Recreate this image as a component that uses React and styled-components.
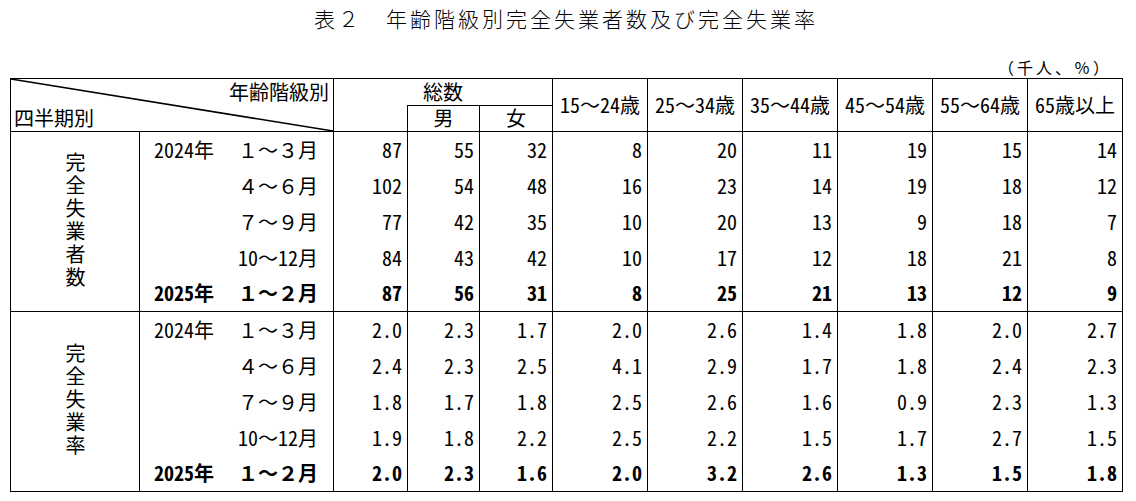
import styled, { createGlobalStyle } from "styled-components";

const GlobalStyle = createGlobalStyle`
  body {
    margin: 0;
    background: #fff;
    color: #000;
  }
`;

const Page = styled.div`
  width: 1112px;
  padding: 5px 14px 0 10px;
  font-family: "Noto Sans Mono CJK JP", "Noto Sans CJK JP", sans-serif;
`;

const Title = styled.h1`
  margin: 0;
  height: 26px;
  line-height: 26px;
  text-align: center;
  font-size: 21px;
  font-weight: 300;
  letter-spacing: 3px;
  font-family: "Noto Sans CJK JP", sans-serif;
`;

const Units = styled.div`
  margin-top: 26px;
  height: 21px;
  line-height: 21px;
  padding-right: 10px;
  text-align: right;
  font-size: 16px;
  font-weight: 300;
  letter-spacing: 3px;
`;

const Table = styled.table`
  width: 1112px;
  border-collapse: collapse;
  table-layout: fixed;
  font-size: 20px;
  line-height: 1;
`;

const HeadRow = styled.tr`
  height: 26px;
`;

const Th = styled.th`
  border: 1px solid #000;
  padding: 0;
  font-weight: 400;
  text-align: center;
  vertical-align: middle;
`;

// 左上の斜線セル
const CornerCell = styled(Th)`
  position: relative;
  padding: 0 4px 0 3px;
`;

const CornerGrid = styled.div`
  display: grid;
  grid-template-rows: 26px 26px;
  align-items: center;
`;

const CornerTop = styled.span`
  text-align: right;
`;

const CornerBottom = styled.span`
  text-align: left;
`;

const Diagonal = styled.svg`
  position: absolute;
  top: 0;
  left: 0;
  width: 100%;
  height: 100%;
  overflow: visible;
  pointer-events: none;
`;

const TotalHead = styled(Th)`
  border-bottom: none;
`;

const BlankSub = styled(Th)`
  border-top: none;
`;

const Section = styled.tbody`
  border-top: 1px solid #000;
  border-bottom: 1px solid #000;
`;

const DataRow = styled.tr`
  height: 36px;
  font-weight: ${(p) => (p.$bold ? 700 : 400)};
`;

const LabelCell = styled.td`
  border: 1px solid #000;
  padding: 0;
  text-align: center;
  vertical-align: middle;
`;

const VerticalLabel = styled.div`
  display: inline-block;
  writing-mode: vertical-rl;
  letter-spacing: 3px;
  font-family: "Noto Sans CJK JP", sans-serif;
`;

const PeriodCell = styled.td`
  border-style: solid;
  border-color: #000;
  border-width: 0 1px;
  padding: 0;
  vertical-align: middle;
`;

const Period = styled.div`
  display: flex;
  justify-content: space-between;
  padding: 0 15px 0 14px;
`;

const NumCell = styled.td`
  border-style: solid;
  border-color: #000;
  border-width: 0 1px;
  padding: 0 5px 0 0;
  text-align: right;
  vertical-align: middle;
`;

const widths = [129, 194, 74, 72, 73, 95, 95, 95, 95, 95, 95];
const ages = ["15～24歳", "25～34歳", "35～44歳", "45～54歳", "55～64歳", "65歳以上"];

const periods = [
  { year: "2024年", period: "１～３月" },
  { year: "", period: "４～６月" },
  { year: "", period: "７～９月" },
  { year: "", period: "10～12月" },
  { year: "2025年", period: "１～２月", bold: true },
];

const sections = [
  {
    label: "完全失業者数",
    values: [
      [87, 55, 32, 8, 20, 11, 19, 15, 14],
      [102, 54, 48, 16, 23, 14, 19, 18, 12],
      [77, 42, 35, 10, 20, 13, 9, 18, 7],
      [84, 43, 42, 10, 17, 12, 18, 21, 8],
      [87, 56, 31, 8, 25, 21, 13, 12, 9],
    ],
  },
  {
    label: "完全失業率",
    values: [
      ["2.0", "2.3", "1.7", "2.0", "2.6", "1.4", "1.8", "2.0", "2.7"],
      ["2.4", "2.3", "2.5", "4.1", "2.9", "1.7", "1.8", "2.4", "2.3"],
      ["1.8", "1.7", "1.8", "2.5", "2.6", "1.6", "0.9", "2.3", "1.3"],
      ["1.9", "1.8", "2.2", "2.5", "2.2", "1.5", "1.7", "2.7", "1.5"],
      ["2.0", "2.3", "1.6", "2.0", "3.2", "2.6", "1.3", "1.5", "1.8"],
    ],
  },
];

const App = () => {
  return (
    <Page>
      <GlobalStyle />
      <Title>表２　年齢階級別完全失業者数及び完全失業率</Title>
      <Units>（千人、％）</Units>
      <Table>
        <colgroup>
          {widths.map((w, i) => (
            <col key={i} style={{ width: w }} />
          ))}
        </colgroup>
        <thead>
          <HeadRow>
            <CornerCell colSpan={2} rowSpan={2}>
              <Diagonal>
                <line x1="0" y1="0" x2="100%" y2="100%" stroke="#000" strokeWidth="1.6" />
              </Diagonal>
              <CornerGrid>
                <CornerTop>年齢階級別</CornerTop>
                <CornerBottom>四半期別</CornerBottom>
              </CornerGrid>
            </CornerCell>
            <TotalHead colSpan={3}>総数</TotalHead>
            {ages.map((a) => (
              <Th key={a} rowSpan={2}>
                {a}
              </Th>
            ))}
          </HeadRow>
          <HeadRow>
            <BlankSub />
            <Th>男</Th>
            <Th>女</Th>
          </HeadRow>
        </thead>
        {sections.map((s) => (
          <Section key={s.label}>
            {s.values.map((vals, r) => (
              <DataRow key={r} $bold={periods[r].bold}>
                {r === 0 && (
                  <LabelCell rowSpan={5}>
                    <VerticalLabel>{s.label}</VerticalLabel>
                  </LabelCell>
                )}
                <PeriodCell>
                  <Period>
                    <span>{periods[r].year}</span>
                    <span>{periods[r].period}</span>
                  </Period>
                </PeriodCell>
                {vals.map((v, c) => (
                  <NumCell key={c}>{v}</NumCell>
                ))}
              </DataRow>
            ))}
          </Section>
        ))}
      </Table>
    </Page>
  );
};

export default App;
